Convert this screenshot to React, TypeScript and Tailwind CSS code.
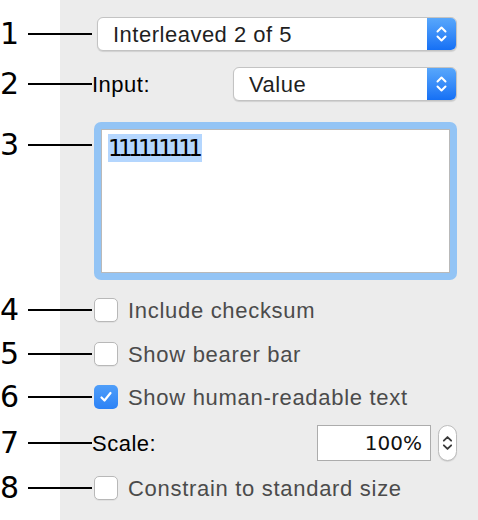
import React from "react";

const sans = "font-['Liberation_Sans',Arial,sans-serif]";
const dejavu = "font-['DejaVu_Sans',Verdana,sans-serif]";

function Chevrons({ className }: { className?: string }) {
    return (
        <svg viewBox="0 0 12 20" className={className} fill="none" stroke="currentColor" strokeWidth="2" strokeLinecap="round" strokeLinejoin="round">
            <path d="M2 7.5 6 3.5 10 7.5" />
            <path d="M2 12.5 6 16.5 10 12.5" />
        </svg>
    );
}

function Popup({ label, width }: { label: string; width: string }) {
    return (
        <div className={`flex h-[34px] ${width} rounded-[6px] border border-[#c3c3c3] bg-white shadow-[0_1px_1px_rgba(0,0,0,0.12)] overflow-hidden`}>
            <div className={`flex-1 flex items-center pl-[15px] ${sans} text-[22px] tracking-[0.5px] text-[#1f1f1f]`}>{label}</div>
            <div className="w-[29px] flex items-center justify-center bg-gradient-to-b from-[#58a7fb] to-[#1570f5] text-white">
                <Chevrons className="w-[13px] h-[20px]" />
            </div>
        </div>
    );
}

function Checkbox({ checked, label }: { checked?: boolean; label: string }) {
    return (
        <div className="flex items-center ml-[2px]">
            {checked ? (
                <div className="w-6 h-6 rounded-[5px] bg-gradient-to-b from-[#4f9ef9] to-[#2c82f6] flex items-center justify-center">
                    <svg viewBox="0 0 16 16" className="w-[16px] h-[16px]" fill="none" stroke="white" strokeWidth="2.2" strokeLinecap="round" strokeLinejoin="round">
                        <path d="M3.5 8.5 6.5 11.5 12.5 4" />
                    </svg>
                </div>
            ) : (
                <div className="w-6 h-6 rounded-[5px] border border-[#b8b8b8] bg-white shadow-[0_1px_0_rgba(0,0,0,0.05)]" />
            )}
            <span className={`ml-[10px] ${sans} text-[22px] tracking-[0.7px] text-[#4b4b4b]`}>{label}</span>
        </div>
    );
}

function Row({ n, top, h, mt, children }: { n: number; top?: boolean; h: string; mt: string; children: React.ReactNode }) {
    return (
        <div className={`flex ${top ? "items-start" : "items-center"} ${h} ${mt}`}>
            <div className={`flex items-center shrink-0 ${top ? "h-[46px]" : ""}`}>
                <span className={`w-[28px] ${dejavu} text-[30px] leading-none text-black`}>{n}</span>
                <span className="h-[2px] w-[64px] bg-black" />
            </div>
            {children}
        </div>
    );
}

export default function App() {
    return (
        <div className="w-[478px] h-[520px] bg-[linear-gradient(90deg,#ffffff_60px,#ececec_60px)] pt-[17px] pr-[21px] flex flex-col">
            <Row n={1} h="h-[34px]" mt="mt-0">
                <div className="ml-[5px]">
                    <Popup label="Interleaved 2 of 5" width="w-[360px]" />
                </div>
            </Row>

            <Row n={2} h="h-[34px]" mt="mt-[16px]">
                <span className={`${sans} text-[22px] tracking-[0.5px] text-black`}>Input:</span>
                <div className="ml-auto">
                    <Popup label="Value" width="w-[224px]" />
                </div>
            </Row>

            <Row n={3} top h="h-[158px]" mt="mt-[21px]">
                <div className="ml-[2px] w-[374px] h-[158px] rounded-[7px] bg-[#93c4f5] p-[7px]">
                    <div className="h-full bg-white border border-[#b9b9b9] pl-[6px] pt-[4px]">
                        <span className={`inline-block bg-[#b4d6fe] ${dejavu} text-[23px] leading-[28px] tracking-[-4.6px] pr-[4px] text-black`}>111111111</span>
                    </div>
                </div>
            </Row>

            <Row n={4} h="h-[24px]" mt="mt-[18px]">
                <Checkbox label="Include checksum" />
            </Row>

            <Row n={5} h="h-[24px]" mt="mt-[20px]">
                <Checkbox label="Show bearer bar" />
            </Row>

            <Row n={6} h="h-[24px]" mt="mt-[19px]">
                <Checkbox checked label="Show human-readable text" />
            </Row>

            <Row n={7} h="h-[36px]" mt="mt-[16px]">
                <span className={`${sans} text-[22px] tracking-[0.5px] text-black`}>Scale:</span>
                <div className="ml-auto flex items-center gap-[7px]">
                    <div className={`w-[114px] h-[36px] border border-[#acacac] bg-white flex items-center justify-end pr-[8px] ${dejavu} text-[20px] text-[#111]`}>
                        100%
                    </div>
                    <div className="w-[19px] h-[36px] rounded-full border border-[#bdbdbd] bg-white shadow-[0_1px_1px_rgba(0,0,0,0.1)] flex items-center justify-center text-[#3a3a3a]">
                        <Chevrons className="w-[11px] h-[22px]" />
                    </div>
                </div>
            </Row>

            <Row n={8} h="h-[24px]" mt="mt-[15px]">
                <Checkbox label="Constrain to standard size" />
            </Row>
        </div>
    );
}
